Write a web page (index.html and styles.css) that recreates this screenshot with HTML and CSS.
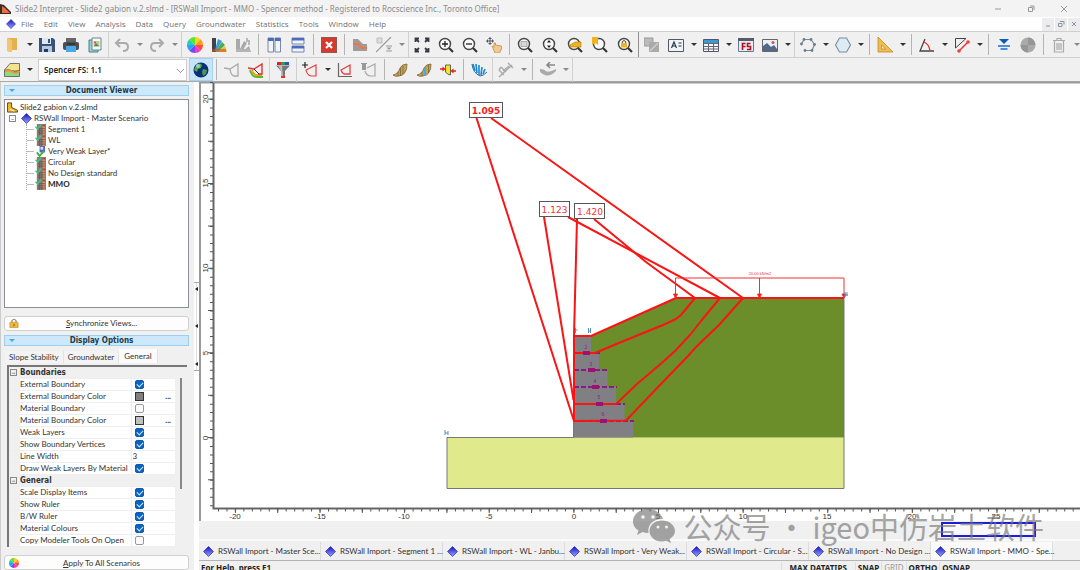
FILE: index.html
```html
<!DOCTYPE html>
<html lang="en">
<head>
<meta charset="UTF-8">
<meta name="viewport" content="width=device-width, initial-scale=1.0">
<title>Slide2 Interpret</title>
<link rel="stylesheet" href="styles.css">
</head>
<body>

<!-- shared icons -->
<svg class="defs" aria-hidden="true">
    <defs>
        <linearGradient id="blueGrad" x1="0" y1="0" x2="0" y2="1">
            <stop offset="0" stop-color="#1414c8"/>
            <stop offset="1" stop-color="#9aa4ff"/>
        </linearGradient>
        <symbol id="diamond" viewBox="0 0 12 12">
            <path d="M6 .6 11.4 6 6 11.4.6 6z" fill="url(#blueGrad)" stroke="#2a2a9a" stroke-width=".8"/>
        </symbol>
        <symbol id="calc" viewBox="0 0 12 12">
            <rect x="2" y="0" width="10" height="12" fill="#8a7d78"/>
            <path d="M8 3h3v9H8z" fill="#d98a66"/>
            <path d="M3 5h8M3 7.5h8M3 10h8M5 4v8M7.5 4v8" stroke="#5d5552" stroke-width=".7"/>
            <path d="M8 1.500h3" stroke="#c8401c"/>
            <path d="M.5 3 3 5.500 6.500.8" fill="none" stroke="#3cc878" stroke-width="1.500"/>
        </symbol>
        <symbol id="wheel" viewBox="0 0 16 16">
            <path d="M8 8V0a8 8 0 0 1 5.700 2.300z" fill="#ffd21e"/>
            <path d="M8 8l5.700-5.700A8 8 0 0 1 16 8z" fill="#ff9a1e"/>
            <path d="M8 8h8a8 8 0 0 1-2.300 5.700z" fill="#ff4a3c"/>
            <path d="M8 8l5.700 5.700A8 8 0 0 1 8 16z" fill="#f03cc8"/>
            <path d="M8 8v8a8 8 0 0 1-5.700-2.300z" fill="#7a46f0"/>
            <path d="M8 8l-5.700 5.700A8 8 0 0 1 0 8z" fill="#28a0ff"/>
            <path d="M8 8H0a8 8 0 0 1 2.300-5.700z" fill="#1ed2b4"/>
            <path d="M8 8 2.300 2.300A8 8 0 0 1 8 0z" fill="#5ae628"/>
        </symbol>
        <symbol id="lens" viewBox="0 0 16 16">
            <circle cx="7" cy="7" r="5.500" fill="#f8f8f8" stroke="#444" stroke-width="1.400"/>
            <path d="M11 11l4 4" stroke="#333" stroke-width="2.200"/>
        </symbol>
        <symbol id="wedge" viewBox="0 0 16 16">
            <path d="M0 6l6 1 8-5v12H9.500Q6.500 12 6 7" fill="none" stroke="currentColor" stroke-width="1.300"/>
        </symbol>
    </defs>
</svg>

<header class="titlebar">
    <svg class="icon-app" viewBox="0 0 12 12"><path d="M0 1l4 1 7 7v2H0z" fill="#3b2a28"/><path d="M2 3l3 2 5 5H2z" fill="#e87040"/></svg>
    <span class="title">Slide2 Interpret - Slide2 gabion v.2.slmd - [RSWall Import - MMO - Spencer method - Registered to Rocscience Inc., Toronto Office]</span>
    <div class="window-buttons">
        <button aria-label="Minimize"><svg viewBox="0 0 8 8"><path d="M1 4h6"/></svg></button>
        <button aria-label="Restore"><svg viewBox="0 0 8 8"><path d="M1.500 2.500h4v4h-4zM3 1h4v4"/></svg></button>
        <button aria-label="Close"><svg viewBox="0 0 8 8"><path d="M1 1l6 6M7 1 1 7"/></svg></button>
    </div>
</header>

<nav class="menubar">
    <svg class="icon-doc"><use href="#diamond"/></svg>
    <a href="#">File</a>
    <a href="#">Edit</a>
    <a href="#">View</a>
    <a href="#">Analysis</a>
    <a href="#">Data</a>
    <a href="#">Query</a>
    <a href="#">Groundwater</a>
    <a href="#">Statistics</a>
    <a href="#">Tools</a>
    <a href="#">Window</a>
    <a href="#">Help</a>
    <div class="mdi-buttons">
        <button aria-label="Minimize view"><svg viewBox="0 0 8 8"><path d="M2 6h4"/></svg></button>
        <button aria-label="Restore view"><svg viewBox="0 0 8 8"><path d="M1.500 3.500h3.500v3h-3.500zM3 1.500h4v3"/></svg></button>
        <button aria-label="Close view"><svg viewBox="0 0 8 8"><path d="M2 2l4 4M6 2 2 6"/></svg></button>
    </div>
</nav>

<div class="toolbar toolbar-main">
    <button aria-label="Open"><svg viewBox="0 0 16 16"><path d="M3 1h10v12H7v2L3 14z" fill="#e6b04a"/><path d="M3 1l5 2v12l-5-1z" fill="#f2c670"/></svg></button>
    <button class="caret" aria-label="Open recent"></button>
    <button aria-label="Save"><svg viewBox="0 0 16 16"><path d="M0 1h14l2 2v12H0z" fill="#38527e"/><path d="M3 1h9v6H3z" fill="#dfe7f2"/><path d="M9 2h2v4H9z" fill="#38527e"/><path d="M3 9h10v6H3z" fill="#b8c8de"/><path d="M5 12h4v3H5z" fill="#223a60"/></svg></button>
    <button aria-label="Print"><svg viewBox="0 0 16 16"><path d="M3 1h10v5H3z" fill="#666"/><rect y="5" width="16" height="8" rx="2" fill="#4a4f56"/><path d="M3 9h10v6H3z" fill="#4aa8e8"/><path d="M4 7h8" stroke="#222"/></svg></button>
    <button aria-label="Copy"><svg viewBox="0 0 16 16"><path d="M2 3h9v12H2z" fill="#9ccdd0" stroke="#4c7f86"/><path d="M5 1h9v12H5z" fill="#f4fafa" stroke="#5e8c90"/><path d="M6.500 4h6v6h-6z" fill="#d8c09a"/><path d="M7 9l2-3 3 3z" fill="#3d9950"/><circle cx="8" cy="5.500" r="1" fill="#e84038"/></svg></button>
    <span class="edge"></span>
    <button aria-label="Undo"><svg viewBox="0 0 16 16" class="stroke-grey"><path d="M6 2 2 6l4 4M2 6h8q4 0 4 4t-5 4"/></svg></button>
    <button class="caret dim" aria-label="Undo list"></button>
    <button aria-label="Redo"><svg viewBox="0 0 16 16" class="stroke-grey"><path d="M10 2l4 4-4 4M14 6H6q-4 0-4 4t5 4"/></svg></button>
    <button class="caret dim" aria-label="Redo list"></button>
    <span class="edge"></span>
    <button aria-label="Display options"><svg><use href="#wheel"/></svg></button>
    <button aria-label="Contour options"><svg viewBox="0 0 16 16"><path d="M1 1h4v14H1z" fill="#3d4348"/><path d="M4 13 7 2l4 2-6 11z" fill="#3c9cd8"/><path d="M5 14l6-9 3 3-7 7z" fill="#4aae48"/><path d="M6 15l8-6 2 6z" fill="#e8c030"/><path d="M1 12h14v3H1z" fill="#d05030" opacity=".6"/></svg></button>
    <button aria-label="Contours off" disabled><svg viewBox="0 0 16 16"><path d="M1 2h4v13H1zM5 12 9 4l3 2-5 9zM7 15l7-6 2 6z" fill="#a9a9a9"/><path d="M1 12h14v3H1z" fill="#b4b4b4"/><path d="M12 1v4M14 3v5" stroke="#b8b8b8" stroke-width="2"/></svg></button>
    <span class="sep"></span>
    <button aria-label="Tile vertically"><svg viewBox="0 0 16 16"><path d="M2 1h5.500v14H2zM9 1h5.500v14H9z" fill="#f0f4fc" stroke="#7888a8"/><path d="M2 1h5.500v3H2zM9 1h5.500v3H9z" fill="#4a6cc0"/></svg></button>
    <button aria-label="Tile horizontally"><svg viewBox="0 0 16 16"><path d="M2 1h12v6H2zM2 9h12v6H2z" fill="#f0f4fc" stroke="#7888a8"/><path d="M2 1h12v2.500H2zM2 9h12v2.500H2z" fill="#4a6cc0"/></svg></button>
    <span class="sep"></span>
    <button aria-label="Close all"><svg viewBox="0 0 16 16"><rect x=".5" y=".5" width="15" height="15" fill="#d8392c" stroke="#8a5a58"/><path d="M5 5l6 6M11 5l-6 6" stroke="#fff" stroke-width="2.200"/></svg></button>
    <span class="sep"></span>
    <button aria-label="Slope"><svg viewBox="0 0 16 16"><path d="M1 2h5l5 5h4v7H1z" fill="#9c9c9c"/><path d="M1 7h5l4 4h5" stroke="#f07840" stroke-width="2" fill="none"/></svg></button>
    <button aria-label="Units" disabled><svg viewBox="0 0 16 16"><path d="M1 1h5v5H1z" fill="#ddd" stroke="#bbb"/><path d="M15 0 0 15" stroke="#999" stroke-width="1.200"/><path d="M10 9h6M10 14h6" stroke="#999"/><path d="M10.500 10.500h5l-2.500 2.500z" fill="#999"/></svg></button>
    <button class="caret dim" aria-label="Units list"></button>
    <span class="edge"></span>
    <button aria-label="Zoom all"><svg viewBox="0 0 16 16"><path d="M1.500 5V1.500H5M11 1.500h3.500V5M14.500 11v3.500H11M5 14.500H1.500V11M2 2l3 3M14 2l-3 3M14 14l-3-3M2 14l3-3" fill="none" stroke="#3a3a44" stroke-width="1.800"/></svg></button>
    <button aria-label="Zoom in"><svg viewBox="0 0 16 16"><use href="#lens"/><path d="M4 7h6M7 4v6" stroke="#222" stroke-width="1.300"/></svg></button>
    <button aria-label="Zoom out"><svg viewBox="0 0 16 16"><use href="#lens"/><path d="M4 7h6" stroke="#222" stroke-width="1.300"/></svg></button>
    <button aria-label="Pan"><svg viewBox="0 0 16 16"><path d="M4 0v8M0 4h8M2.500 1.500h3M2.500 6.500h3M1.500 2.500v3M6.500 2.500v3" stroke="#556" stroke-width="1"/><path d="M6 9l2 1V6h1.500v2l6 1v3l-2 4H9z" fill="#f0c890" stroke="#c09050" stroke-width=".8"/></svg></button>
    <span class="sep"></span>
    <div class="group">
        <button aria-label="Zoom window"><svg viewBox="0 0 16 16"><use href="#lens"/><path d="M4 4.500h6v5H4z" fill="#d8d8d8" stroke="#999" stroke-width=".8"/></svg></button>
        <button aria-label="Zoom vertical"><svg viewBox="0 0 16 16"><use href="#lens"/><path d="M7 3l2 2.500H5zM7 11l2-2.500H5z" fill="#222"/></svg></button>
        <button aria-label="Zoom slope"><svg viewBox="0 0 16 16"><use href="#lens"/><path d="M3 10V8l5-3h6v5z" fill="#f2b21e" stroke="#a87a10" stroke-width=".6"/></svg></button>
        <button aria-label="Zoom bookmark"><svg viewBox="0 0 16 16"><use href="#lens"/><path d="M0 0h6v8L3 6 0 8z" fill="#f2b21e"/></svg></button>
        <button aria-label="Lock zoom"><svg viewBox="0 0 16 16"><use href="#lens"/><path d="M4 6h6v4.500H4z" fill="#eeb422"/><path d="M5.300 6V4.500q1.700-2 3.400 0V6" fill="none" stroke="#444"/></svg></button>
    </div>
    <span class="edge dark"></span>
    <button aria-label="Copy tools" disabled><svg viewBox="0 0 16 16"><path d="M0 1h9v8H0z" fill="#bbb" stroke="#999"/><path d="M5 5h10v10H5z" fill="#aaa"/><path d="M6 14l8-8" stroke="#ccc" stroke-width="1.500"/></svg></button>
    <button aria-label="Text box"><svg viewBox="0 0 16 16"><path d="M.5 2.500h15v12H.5z" fill="#eef4f8" stroke="#556"/><path d="M3.500 11 6 5l2.500 6M4.500 9h3M10.500 6h3M10.500 9h3" fill="none" stroke="#234" stroke-width="1.100"/></svg></button>
    <button class="caret" aria-label="Text tools"></button>
    <button aria-label="Table"><svg viewBox="0 0 16 16"><path d="M.5 2.500h15v12H.5z" fill="#f4f6f8" stroke="#556"/><path d="M1 3h14v3H1z" fill="#3a9ad8"/><path d="M1 6.500h14M1 9.500h14M1 12h14M5.500 6v8M10.500 6v8" stroke="#667"/></svg></button>
    <button class="caret" aria-label="Table tools"></button>
    <button aria-label="Factor of safety"><svg viewBox="0 0 16 16"><path d="M.5 1.500h15v13H.5z" fill="#e6ecf4" stroke="#66789a"/><path d="M0 1h16v3H0z" fill="#555c68"/><path d="M4.500 13V6.500h3M4.500 9.500h3M12.500 6.500h-3v3h3v3h-3.500" fill="none" stroke="#b01020" stroke-width="1.600"/></svg></button>
    <button aria-label="Image"><svg viewBox="0 0 16 16"><path d="M.5 2.500h15v12H.5z" fill="#e8f0f8" stroke="#666"/><path d="M1 14V9l4-3 4 4 3-2 3 4v2z" fill="#56688a"/><circle cx="11" cy="5.500" r="1.500" fill="#e84848"/></svg></button>
    <button class="caret" aria-label="Image tools"></button>
    <span class="edge"></span>
    <button aria-label="Polyline"><svg viewBox="0 0 16 16"><path d="M1.500 7 4 2.500h7l3.500 5-2.500 6H5" fill="none" stroke="#7a8a9c" stroke-width="1.200"/><g fill="#6a7c94"><circle cx="1.500" cy="7" r="1.400"/><circle cx="4" cy="2.500" r="1.400"/><circle cx="11" cy="2.500" r="1.400"/><circle cx="14.500" cy="7.500" r="1.400"/><circle cx="12" cy="13.500" r="1.400"/><circle cx="5" cy="13.500" r="1.400"/></g></svg></button>
    <button class="caret" aria-label="Polyline tools"></button>
    <button aria-label="Polygon"><svg viewBox="0 0 16 16"><path d="M4.500 1h7l4 7-4 7h-7l-4-7z" fill="#dcecf4" stroke="#7a8c9c" stroke-width="1.100"/></svg></button>
    <button class="caret" aria-label="Polygon tools"></button>
    <span class="sep"></span>
    <button aria-label="Set square"><svg viewBox="0 0 16 16"><path d="M1 0l15 15H1z" fill="#f0bc50" stroke="#c08c28" stroke-width=".8"/><path d="M4.500 8l4 4h-4z" fill="#eee" stroke="#c08c28" stroke-width=".8"/></svg></button>
    <button class="caret" aria-label="Measure tools"></button>
    <span class="sep"></span>
    <button aria-label="Angle"><svg viewBox="0 0 16 16"><path d="M6 2 1 14h14" fill="none" stroke="#444" stroke-width="1.300"/><path d="M5 5q5 2 6 9" fill="none" stroke="#e83030" stroke-width="1.300"/></svg></button>
    <button class="caret" aria-label="Angle tools"></button>
    <button aria-label="Dimension"><svg viewBox="0 0 16 16"><path d="M1.500 11V1.500H12z" fill="#eee" stroke="#444"/><path d="M5 14l9-9" stroke="#e83030" stroke-width="1.500"/><circle cx="5" cy="14" r="1.800" fill="#f04040"/><circle cx="14" cy="5" r="1.800" fill="#f04040"/></svg></button>
    <button class="caret" aria-label="Dimension tools"></button>
    <span class="sep"></span>
    <button aria-label="Water table"><svg viewBox="0 0 16 16"><path d="M3 2h10l-5 5z" fill="#0c5ab4"/><path d="M2 9h12M4.500 12h7" stroke="#1470d0" stroke-width="1.400"/></svg></button>
    <button aria-label="Stereonet" disabled><svg viewBox="0 0 16 16"><circle cx="8" cy="8" r="7.500" fill="#aaa"/><path d="M8 8V.5A7.500 7.500 0 0 1 15.500 8zM8 8v7.500A7.500 7.500 0 0 1 .5 8z" fill="#969696"/></svg></button>
    <span class="sep"></span>
    <button aria-label="Delete" disabled><svg viewBox="0 0 16 16"><path d="M2 3.500h12M6 3V1.500h4V3M3.500 4v11h9V4M6 6v7M8 6v7M10 6v7" fill="none" stroke="#aaa" stroke-width="1.200"/></svg></button>
    <button class="caret dim" aria-label="Delete list"></button>
</div>

<div class="toolbar toolbar-second">
    <button aria-label="Materials"><svg viewBox="0 0 16 16"><path d="M.5 8 6 1.500h9.500V9H.5z" fill="#f2e38c" stroke="#555" stroke-width=".8"/><path d="M.5 8q5-1 8 1t7-1v6.500H.5z" fill="#8edb7c" stroke="#555" stroke-width=".8"/><path d="M1 9q5-1 8 1t6.500-1" fill="none" stroke="#f09040" stroke-width="1.800"/></svg></button>
    <button class="caret" aria-label="Materials list"></button>
    <select class="method" aria-label="Analysis method"><option>Spencer FS: 1.1</option></select>
    <button class="active" aria-label="Global minimum"><svg viewBox="0 0 16 16"><circle cx="8" cy="8" r="7.500" fill="#0c2f78"/><path d="M3 3q4-3 6 0l-1 3-3 1-1 3-3-2z" fill="#55a848"/><path d="M10 7l4 1-1 4-3 2-1-4z" fill="#4a9c58"/><circle cx="5" cy="4" r="2" fill="#b8e4e8" opacity=".7"/></svg></button>
    <span class="sep"></span>
    <button class="tint-grey" aria-label="Surfaces" disabled><svg><use href="#wedge"/></svg></button>
    <button aria-label="All surfaces"><svg viewBox="0 0 16 16"><path d="M2 8q2 7 7 7h6" fill="none" stroke="#58b830" stroke-width="2"/><path d="M4 7.500q1 6 6 5.500h4" fill="none" stroke="#f0a020" stroke-width="1.800"/><path d="M0 6l6 1 8-5v10h-4" fill="none" stroke="#e83030" stroke-width="1.400"/><path d="M6 7l5 5" stroke="#333"/></svg></button>
    <span class="edge"></span>
    <button aria-label="Filter"><svg viewBox="0 0 16 16"><path d="M1 3.500h14L10 9v5H6V9z" fill="#777"/><path d="M3 3.500h4L8 14H6V9z" fill="#bbb"/><path d="M2 0h4v3H2z" fill="#d02828"/><path d="M6 0h4v3H6z" fill="#28a048"/><path d="M10 0h4v3h-4z" fill="#2850d0"/><path d="M6 14h4v2H6z" fill="#e83030"/></svg></button>
    <span class="edge"></span>
    <button class="tint-red" aria-label="Add query"><svg viewBox="0 0 16 16"><path d="M3 0v6M0 3h6" stroke="#222" stroke-width="1.200"/><path d="M4 8l10-5v11H9q-4-1-5-6z" fill="none" stroke="currentColor" stroke-width="1.200"/></svg></button>
    <button class="caret" aria-label="Query list"></button>
    <button class="tint-red" aria-label="Graph query"><svg viewBox="0 0 16 16"><path d="M1.500 1v13.500H15" fill="none" stroke="#666" stroke-width="1.200"/><path d="M4 8l9-5v9H7q-2-1-3-4z" fill="none" stroke="currentColor" stroke-width="1.300"/></svg></button>
    <button class="tint-grey" aria-label="Delete query" disabled><svg viewBox="0 0 16 16"><path d="M1 2h4v6H1zM0 1h6v1H0z" fill="#999"/><path d="M6 6l8-4v12H9q-4-1-5-5" fill="none" stroke="currentColor" stroke-width="1.200"/></svg></button>
    <span class="sep"></span>
    <button aria-label="Show slices"><svg viewBox="0 0 16 16"><path d="M1 13q5-1 7-7 2-4 7-4 0 11-8 12-4 1-6-1z" fill="#c4a45c" stroke="#7a6430" stroke-width=".8"/><path d="M6 10v4M8.500 6v8M11 4v8" stroke="#7a6430" stroke-width=".8"/></svg></button>
    <button aria-label="Query slice"><svg viewBox="0 0 16 16"><path d="M1 13q5-1 7-7 2-4 7-4 0 11-8 12-4 1-6-1z" fill="#c4a45c" stroke="#7a6430" stroke-width=".8"/><path d="M7.500 7 10 4v9l-2.500 1z" fill="#50a8d8"/><path d="M6 10v4M12.500 3v8" stroke="#7a6430" stroke-width=".8"/></svg></button>
    <button aria-label="Slice forces"><svg viewBox="0 0 16 16"><path d="M5.500 3h5v10l-3-1-2-2z" fill="#f4e428" stroke="#554" stroke-width=".9"/><path d="M0 7h4M16 9h-4" stroke="#e81c1c" stroke-width="1.400"/><path d="M2.500 4.500 5.500 7l-3 2.500zM13.500 6.500l-3 2.500 3 2.500z" fill="#e81c1c"/></svg></button>
    <span class="sep"></span>
    <button aria-label="Distribution"><svg viewBox="0 0 16 16"><path d="M1 2q1 9 8 12 3 0 7-4" fill="none" stroke="#3068a0"/><path d="M2 2l2 7M5 2l1 9M8 3v10M11 5l-1 8M14 7l-2 5" stroke="#1c88d0" stroke-width="1.600"/></svg></button>
    <span class="edge"></span>
    <button aria-label="Support forces" disabled><svg viewBox="0 0 16 16"><path d="M1 15 14 3" stroke="#aaa" stroke-width="1.500"/><path d="M10 1l5 5M3 5l5 5M1 8l5 5M3 5 1 8M11 4 5 9" stroke="#aaa" stroke-width="1.400"/></svg></button>
    <button class="caret dim" aria-label="Support list"></button>
    <span class="sep"></span>
    <button aria-label="Displacement" disabled><svg viewBox="0 0 16 16"><path d="M0 7q4 0 6 2t10-2v2q-6 6-11 4T0 9z" fill="#aaa"/><path d="M15 3H8M10 0 7 3l3 3" fill="none" stroke="#888" stroke-width="1.600"/></svg></button>
    <button class="caret dim" aria-label="Displacement list"></button>
    <span class="edge"></span>
</div>

<main class="workspace">
    <aside class="sidebar">
        <h2 class="panel-title"><span class="arrow"></span>Document Viewer</h2>
        <ul class="tree">
            <li><svg viewBox="0 0 12 12"><path d="M.5 1H5v5l6.500 3v2H.5z" fill="#f0b828" stroke="#554010"/><path d="M3 8l5 2" stroke="#fff"/></svg>Slide2 gabion v.2.slmd</li>
            <li class="scenario"><span class="toggle">−</span><svg><use href="#diamond"/></svg>RSWall Import - Master Scenario
                <ul>
                    <li><svg><use href="#calc"/></svg>Segment 1</li>
                    <li><svg><use href="#calc"/></svg>WL</li>
                    <li><svg viewBox="0 0 12 12"><path d="M5 0h6v7H5z" fill="#5868b8"/><path d="M6 1h3v3H6z" fill="#dde"/><path d="M2 7l3 4 5-6" fill="none" stroke="#38b048" stroke-width="2"/></svg>Very Weak Layer*</li>
                    <li><svg><use href="#calc"/></svg>Circular</li>
                    <li><svg><use href="#calc"/></svg>No Design standard</li>
                    <li class="current"><svg><use href="#calc"/></svg>MMO</li>
                </ul>
            </li>
        </ul>
        <button class="wide-button">
            <svg viewBox="0 0 12 12"><path d="M3.500 6V3.500q2.500-4 5 0V6" fill="none" stroke="#998860" stroke-width="1.400"/><rect x="1" y="5" width="10" height="7" rx="1" fill="#f0b83c" stroke="#b08428" stroke-width=".6"/><path d="M6 7v3" stroke="#6a4c10"/></svg>
            <span><u>S</u>ynchronize Views...</span>
        </button>
        <h2 class="panel-title options-title"><span class="arrow"></span>Display Options</h2>
        <div class="option-tabs">
            <button>Slope Stability</button>
            <button>Groundwater</button>
            <button class="selected">General</button>
        </div>
        <div class="options">
            <table>
                <tbody>
                    <tr class="section"><td><span class="toggle">−</span></td><th colspan="2">Boundaries</th></tr>
                    <tr><td></td><td><label for="extB">External Boundary</label></td><td><input type="checkbox" id="extB" checked></td></tr>
                    <tr><td></td><td>External Boundary Color</td><td><span class="swatch dark"></span><button class="more" aria-label="Pick external boundary color">...</button></td></tr>
                    <tr><td></td><td><label for="matB">Material Boundary</label></td><td><input type="checkbox" id="matB"></td></tr>
                    <tr><td></td><td>Material Boundary Color</td><td><span class="swatch"></span><button class="more" aria-label="Pick material boundary color">...</button></td></tr>
                    <tr><td></td><td><label for="weak">Weak Layers</label></td><td><input type="checkbox" id="weak" checked></td></tr>
                    <tr><td></td><td><label for="vert">Show Boundary Vertices</label></td><td><input type="checkbox" id="vert" checked></td></tr>
                    <tr><td></td><td><label for="lineW">Line Width</label></td><td><input type="text" id="lineW" value="3"></td></tr>
                    <tr><td></td><td><label for="drawW">Draw Weak Layers By Material</label></td><td><input type="checkbox" id="drawW" checked></td></tr>
                    <tr class="section"><td><span class="toggle">−</span></td><th colspan="2">General</th></tr>
                    <tr><td></td><td><label for="scale">Scale Display Items</label></td><td><input type="checkbox" id="scale" checked></td></tr>
                    <tr><td></td><td><label for="ruler">Show Ruler</label></td><td><input type="checkbox" id="ruler" checked></td></tr>
                    <tr><td></td><td><label for="bw">B/W Ruler</label></td><td><input type="checkbox" id="bw" checked></td></tr>
                    <tr><td></td><td><label for="matC">Material Colours</label></td><td><input type="checkbox" id="matC" checked></td></tr>
                    <tr><td></td><td><label for="copyM">Copy Modeler Tools On Open</label></td><td><input type="checkbox" id="copyM"></td></tr>
                </tbody>
            </table>
            <div class="scrollbar"><div class="thumb"></div></div>
        </div>
        <button class="wide-button apply">
            <svg><use href="#wheel"/></svg>
            <span><u>A</u>pply To All Scenarios</span>
        </button>
    </aside>

    <div class="splitter">
        <div class="grip"><i></i><i></i><i></i></div>
    </div>

    <section class="view">
        <svg class="plot" viewBox="199 82 881 439" preserveAspectRatio="xMinYMin meet">
            <rect x="199" y="82" width="881" height="439" fill="#fff"/>
            <path d="M200 521V82.500h880" class="frame"/>

            <!-- rulers -->
            <path d="M213.500 83V508.500H1080" class="axis"/>
            <path d="M211.500 82.100V508" class="minor-v"/>
            <path d="M210.500 98.500V508" class="major-v"/>
            <path d="M218 510H1078" class="minor-h"/>
            <path d="M234.900 510.500H1078" class="major-h"/>
            <g class="ruler-text">
                <text x="235" y="519">-20</text>
                <text x="320" y="519">-15</text>
                <text x="404" y="519">-10</text>
                <text x="489" y="519">-5</text>
                <text x="574" y="519">0</text>
                <text x="658" y="519">5</text>
                <text x="743" y="519">10</text>
                <text x="827" y="519">15</text>
                <text x="912" y="519">20</text>
                <text x="996" y="519">25</text>
                <text transform="translate(208 99) rotate(-90)">20</text>
                <text transform="translate(208 183) rotate(-90)">15</text>
                <text transform="translate(208 268) rotate(-90)">10</text>
                <text transform="translate(208 353) rotate(-90)">5</text>
                <text transform="translate(208 438) rotate(-90)">0</text>
            </g>

            <!-- soils -->
            <path d="M447 437.500H844V488H447z" fill="#e0e98c"/>
            <path d="M574 336h17l85-38h168v139.500H574z" fill="#6b8e2a"/>
            <path d="M844 298V488.500H447V437.500h127" class="soil-line"/>
            <path d="M574 336h17v17h8v17h8.500v17h8.500v17h8.500v17h8.500v16.500H574z" fill="#808084"/>
            <path d="M573.500 437.500V336" stroke="#777"/>

            <!-- gabion interfaces -->
            <path d="M574 353h26M574 370h34M574 387h43M574 404h51M574 421h60" class="interface"/>
            <g class="gabion-text">
                <text x="586" y="349">2</text>
                <text x="591" y="366">3</text>
                <text x="595" y="383">4</text>
                <text x="599" y="399">5</text>
                <text x="603" y="416">6</text>
            </g>

            <!-- slip surfaces -->
            <g class="slip">
                <path d="M476.500 118 574 421V336h17l85-38h168"/>
                <path d="M491 118 743 298 719 325 696 347 688 356 659 386 626 420.500 574 421"/>
                <path d="M544 217 573.500 400"/>
                <path d="M568 217 720 298 701 321 690 335 675 351 664 361 650 373 637 384 616 404H574"/>
                <path d="M577 219 574 336"/>
                <path d="M594 219 646 262 695 298 681 315 676 319 663 325 620 342.500 595 353H574"/>
            </g>
            <path d="M583 351h7v4h-7zM588 368h7v4h-7zM592 385h7v4h-7zM596 402h7v4h-7zM600 419h7v4h-7z" fill="#a01070"/>

            <!-- distributed load -->
            <g class="load">
                <path d="M675.500 297V278H844v20M759.500 278v18"/>
                <path d="M673.500 294h4l-2 4zM757.500 294h4l-2 4zM842 294h4l-2 4z" class="head"/>
                <text x="760" y="275">20.00 kN/m2</text>
            </g>
            <path d="M445 430v5M445 433h3M448 431v4M575.500 328v5M575.500 330h2M588.500 328v5M590.500 328v5M588 331h3M845 292v5M847 292v4M845 295h3" class="vertex"/>

            <g class="fs-label">
                <rect x="469.500" y="102.500" width="33" height="15"/>
                <text x="486" y="114">1.095</text>
                <rect x="539.500" y="201.500" width="30" height="15"/>
                <text x="554.500" y="213" class="light">1.123</text>
                <rect x="574.500" y="203.500" width="30" height="15"/>
                <text x="590" y="215" class="light">1.420</text>
            </g>
        </svg>

        <div class="overview"><div class="overview-box"></div></div>

        <div class="doc-tabs">
            <button><svg><use href="#diamond"/></svg>RSWall Import - Master Sce...</button>
            <button><svg><use href="#diamond"/></svg>RSWall Import - Segment 1 ...</button>
            <button><svg><use href="#diamond"/></svg>RSWall Import - WL - Janbu...</button>
            <button><svg><use href="#diamond"/></svg>RSWall Import - Very Weak...</button>
            <button><svg><use href="#diamond"/></svg>RSWall Import - Circular - S...</button>
            <button><svg><use href="#diamond"/></svg>RSWall Import - No Design ...</button>
            <button class="selected"><svg><use href="#diamond"/></svg>RSWall Import - MMO - Spe...</button>
        </div>

        <footer class="statusbar">
            <span class="help">For Help, press F1</span>
            <span class="datatips">MAX DATATIPS</span>
            <span>SNAP</span>
            <span class="off">GRID</span>
            <span>ORTHO</span>
            <span>OSNAP</span>
        </footer>

        <div class="watermark">
            <svg viewBox="0 0 42 36">
                <path d="M15 1C6 1 0 7 0 13.500c0 4 2 7 5.500 9L4 27l5.500-3q3 1 6 1C14 16 21 10.500 30 11 28 5 22 1 15 1z"/>
                <path d="M29 12.500c-7.500 0-12.500 5-12.500 10.500S21.500 33.500 29 33.500q2 0 4-.8L38 35l-1.300-4c3.300-2 5.300-5 5.300-8 0-5.500-5.500-10.500-13-10.500z"/>
                <g fill="#f2f2f2"><circle cx="10" cy="9" r="1.800"/><circle cx="20" cy="9" r="1.800"/><circle cx="25" cy="19" r="1.500"/><circle cx="33.500" cy="19" r="1.500"/></g>
            </svg>
            <span>公众号 · igeo中仿岩土软件</span>
        </div>
    </section>
</main>

</body>
</html>
```
FILE: styles.css
```css
* {
    box-sizing: border-box;
}

body {
    margin: 0;
    height: 100vh;
    display: flex;
    flex-direction: column;
    overflow: hidden;
    background: #f0f0f0;
    color: #333;
    font-family: "Noto Sans", "Open Sans", sans-serif;
    font-size: 8px;
    line-height: 12px;
}

button {
    margin: 0;
    padding: 0;
    border: none;
    background: none;
    color: inherit;
    font: inherit;
}

.defs {
    position: absolute;
    width: 0;
    height: 0;
}

/* title and menu */
.titlebar {
    display: flex;
    align-items: center;
    flex: none;
    height: 17px;
    background: #f3f3f3;
    color: #8c8c8c;
}

.icon-app {
    width: 12px;
    height: 12px;
    margin-right: 3px;
}

.title {
    flex: 1;
    white-space: nowrap;
}

.window-buttons,
.mdi-buttons {
    display: flex;
    align-items: center;
}

.window-buttons button {
    width: 33px;
    height: 16px;
}

.window-buttons svg,
.mdi-buttons svg {
    display: block;
    width: 8px;
    height: 8px;
    margin: auto;
    fill: none;
    stroke: #999;
}

.menubar {
    display: flex;
    align-items: center;
    flex: none;
    gap: 10px;
    height: 14px;
    padding-left: 6px;
    background: #fff;
    font-family: "Open Sans", "Noto Sans", sans-serif;
}

.icon-doc {
    width: 10px;
    height: 10px;
    margin-right: -5px;
}

.menubar a {
    color: #707070;
    text-decoration: none;
}

.mdi-buttons {
    margin-left: auto;
    gap: 1px;
}

.mdi-buttons button {
    width: 12px;
    height: 13px;
    background: #ececec;
}

.mdi-buttons svg {
    stroke: #8a94a4;
}

/* toolbars */
.toolbar {
    display: flex;
    align-items: center;
    flex: none;
    border-top: 1px solid #cfcfcf;
    background: #f0f0f0;
}

.toolbar-main {
    height: 26px;
}

.toolbar-second {
    height: 25px;
    border-bottom: 1px solid #a8a8a8;
}

.group {
    display: flex;
    gap: 1px;
}

.toolbar button {
    flex: none;
    width: 24px;
    height: 23px;
    display: flex;
    align-items: center;
    justify-content: center;
}

.toolbar button svg {
    width: 16px;
    height: 16px;
}

.toolbar .caret {
    width: 11px;
}

.caret::after {
    content: "";
    border: 3px solid transparent;
    border-top-color: #333;
    border-bottom: none;
}

.caret.dim::after {
    border-top-color: #888;
}

.toolbar .active {
    margin-left: 2px;
    background: #c8e4f8;
    border: 1px solid #a4d2f4;
}

.stroke-grey {
    fill: none;
    stroke: #aaa;
    stroke-width: 2;
}

.tint-grey {
    color: #aaa;
}

.tint-red {
    color: #e84040;
}

.sep,
.edge {
    flex: none;
    width: 1px;
    height: 21px;
    margin: 0 3px;
    background: #b4b4b4;
}

.edge {
    height: 25px;
    margin: 0 1px;
    background: #d0d0d0;
}

.edge.dark {
    background: #909090;
}

.method {
    width: 149px;
    height: 22px;
    margin-left: 3px;
    padding-left: 5px;
    appearance: none;
    border: 1px solid #ccc;
    border-radius: 0;
    background-color: #fff;
    background-image: linear-gradient(45deg, transparent 44%, #999 44%, #999 60%, transparent 60%), linear-gradient(-45deg, transparent 44%, #999 44%, #999 60%, transparent 60%);
    background-size: 4px 4px;
    background-position: 138px 9px, 141px 9px;
    background-repeat: no-repeat;
    color: #222;
    font-family: inherit;
    font-size: 8px;
    font-weight: 600;
}

/* workspace */
.workspace {
    flex: 1;
    min-height: 0;
    display: flex;
}

.sidebar {
    flex: none;
    width: 191px;
    padding: 3px 2px 0 3px;
    display: flex;
    flex-direction: column;
    border-left: 1px solid #ccc;
    font-family: Lato, "Liberation Sans", sans-serif;
}

.panel-title {
    display: flex;
    justify-content: center;
    flex: none;
    margin: 0;
    border: 1px solid #9cd0ec;
    background: #cce8fc;
    color: #223a4a;
    font-family: "DejaVu Sans Condensed", "DejaVu Sans", sans-serif;
    font-size: 8px;
    line-height: 9px;
}

.panel-title .arrow {
    margin: 3px auto 0 4px;
    border: 3px solid transparent;
    border-top-color: #4ca8dc;
    border-bottom: none;
    height: 0;
}

.panel-title::after {
    content: "";
    margin-left: auto;
}

.tree,
.tree ul {
    margin: 0;
    padding: 0;
    list-style: none;
}

.tree {
    flex: 1;
    min-height: 0;
    margin-top: 3px;
    padding: 2px;
    border: 1px solid #8c8f98;
    background: #fff;
    line-height: 11px;
    overflow: hidden;
}

.tree svg {
    width: 11px;
    height: 11px;
    margin-right: 2px;
    vertical-align: top;
}

.tree ul {
    margin-left: 19px;
    border-left: 1px dotted #aaa;
}

.tree ul li {
    padding-left: 8px;
    background: linear-gradient(#bbb, #bbb) 0 5px / 7px 1px no-repeat;
}

.tree .current {
    font-weight: 900;
}

.toggle {
    display: inline-block;
    width: 7px;
    height: 7px;
    border: 1px solid #888;
    line-height: 5px;
    text-align: center;
    font-size: 6px;
    font-weight: normal;
}

.tree .toggle {
    margin: 0 5px 0 2px;
}

.wide-button {
    flex: none;
    display: flex;
    align-items: center;
    height: 15px;
    margin: 8px 0 4px;
    padding: 0 4px;
    border: 1px solid #d0d0d0;
    border-radius: 3px;
    background: #fdfdfd;
}

.wide-button svg {
    width: 10px;
    height: 10px;
}

.wide-button span {
    flex: 1;
    text-align: center;
}

.wide-button.apply {
    margin-bottom: 0;
}

.option-tabs {
    flex: none;
    display: flex;
    align-items: flex-end;
    padding: 3px 1px 0;
}

.option-tabs button {
    height: 12px;
    padding: 0 4px;
    background: #f3f3f3;
    border-right: 1px solid #e2e2e2;
    white-space: nowrap;
}

.option-tabs .selected {
    height: 14px;
    padding: 0 5px;
    background: #fbfbfb;
}

.options {
    flex: none;
    display: flex;
    margin: 2px 2px 0 3px;
    border-top: 2px solid #777;
    border-left: 2px solid #777;
    background: #fff;
}

.options table {
    flex: 1;
    border-collapse: collapse;
    table-layout: fixed;
}

.options td,
.options th {
    height: 12px;
    padding: 0;
    border-bottom: 1px solid #eee;
    line-height: 11px;
    text-align: left;
    white-space: nowrap;
}

.options td:first-child {
    width: 11px;
    background: #f0f0f0;
    padding-left: 1px;
}

.options td:nth-child(2) {
    width: 111px;
    border-right: 1px solid #eee;
}

.options td:nth-child(3) {
    padding-left: 3px;
}

.section td,
.section th {
    background: #f0f0f0;
    font-family: "DejaVu Sans Condensed", "DejaVu Sans", sans-serif;
}

.options input,
.swatch {
    display: block;
    width: 9px;
    height: 9px;
    margin: 0;
}

.options input[type="checkbox"] {
    appearance: none;
    border: 1px solid #999;
    border-radius: 2px;
    background: #fafafa;
}

.options input[type="checkbox"]:checked {
    border-color: #0a5cb4;
    background: #0a64c0;
}

.options input:checked::after {
    content: "";
    display: block;
    width: 5px;
    height: 3px;
    margin: 1px;
    border: solid #cfe4f8;
    border-width: 0 0 1px 1px;
    transform: rotate(-45deg);
}

.options input[type="text"] {
    width: 30px;
    border: none;
    padding: 0;
    margin-left: -2px;
    color: inherit;
    font: inherit;
}

.swatch {
    float: left;
    border: 1px solid #333;
    background: #c0c0c0;
}

.swatch.dark {
    background: #808080;
}

.more {
    float: right;
    height: 9px;
    margin-right: 4px;
    font-weight: 900;
    line-height: 9px;
}

.scrollbar {
    width: 12px;
    padding: 11px 5px 0;
    background: #f0f0f0;
}

.thumb {
    width: 2px;
    height: 111px;
    background: #888;
}

.splitter {
    flex: none;
    width: 8px;
    display: flex;
    align-items: center;
    justify-content: flex-end;
    background: linear-gradient(to right, #f0f0f0 3px, #fff 3px);
}

.grip {
    width: 5px;
    height: 89px;
    display: flex;
    flex-direction: column;
    align-items: center;
    justify-content: space-between;
    padding: 4px 0;
    border: solid #aaa;
    border-width: 1px 0;
    background: linear-gradient(#ddd, #ddd) 50% 0 / 1px 100% no-repeat;
}

.grip i {
    border: 2px solid transparent;
    border-right: 3px solid #222;
    border-left: none;
}

.view {
    position: relative;
    flex: 1;
    min-width: 0;
    display: flex;
    flex-direction: column;
}

/* plot */
.plot {
    display: block;
    width: 100%;
    flex: 1;
    min-height: 0;
    fill: none;
}

.plot .frame {
    stroke: #999;
    stroke-width: 2;
}

.plot .axis {
    stroke: #666;
    stroke-width: 2;
}

.minor-v,
.minor-h,
.major-v,
.major-h {
    stroke: #555;
    stroke-width: 3;
    stroke-dasharray: 1 7.462;
}

.major-v,
.major-h {
    stroke-width: 5;
    stroke-dasharray: 1 41.310;
}

.ruler-text text {
    fill: #333;
    font-family: "Liberation Sans", Arial, sans-serif;
    font-size: 8px;
    text-anchor: middle;
}

.soil-line {
    stroke: #777;
}

.interface {
    stroke: #8a1a8a;
    stroke-width: 2;
    stroke-dasharray: 5 2;
}

.gabion-text text {
    fill: #8a1a8a;
    font-family: "Liberation Sans", Arial, sans-serif;
    font-size: 5px;
    text-anchor: middle;
}

.slip path {
    stroke: #fa1414;
    stroke-width: 2;
    stroke-linejoin: round;
}

.load path {
    stroke: #f03030;
}

.load .head {
    fill: #f01414;
}

.load text {
    fill: #f03030;
    font-family: "Liberation Sans", Arial, sans-serif;
    font-size: 4px;
    text-anchor: middle;
}

.vertex {
    stroke: #5a90c0;
}

.fs-label rect {
    fill: #fff;
    stroke: #555;
}

.fs-label text {
    fill: #fa2020;
    font-family: "DejaVu Sans", Verdana, sans-serif;
    font-size: 9px;
    font-weight: bold;
    text-anchor: middle;
}

.fs-label .light {
    fill: #fa3030;
    font-weight: normal;
}

.overview {
    flex: none;
    height: 20px;
    display: flex;
    justify-content: flex-end;
    padding: 1px 44px 0 0;
    border-bottom: 2px solid #fafafa;
}

.overview-box {
    width: 95px;
    height: 15px;
    border: 2px solid #1c1ce0;
    background: #f8f8f8;
}

.doc-tabs {
    flex: none;
    display: flex;
    height: 20px;
    padding-top: 1px;
    border-bottom: 1px solid #b4b4b4;
    font-family: Lato, "Liberation Sans", sans-serif;
}

.doc-tabs button {
    flex: none;
    width: 122px;
    display: flex;
    align-items: center;
    gap: 4px;
    padding-left: 4px;
    border-right: 1px solid #ddd;
    white-space: nowrap;
}

.doc-tabs .selected {
    background: #fafafa;
}

.doc-tabs svg {
    flex: none;
    width: 11px;
    height: 11px;
}

.watermark {
    position: absolute;
    right: 36px;
    bottom: 26px;
    display: flex;
    align-items: center;
    gap: 8px;
    color: #777;
    font-family: "Noto Sans CJK SC", sans-serif;
    font-size: 29px;
    line-height: 36px;
    opacity: .65;
    white-space: nowrap;
    pointer-events: none;
}

.watermark svg {
    width: 42px;
    height: 36px;
    fill: #777;
}

.statusbar {
    flex: none;
    display: flex;
    height: 9px;
    padding: 1px 108px 0 2px;
    overflow: hidden;
    color: #222;
    font-weight: bold;
    line-height: 12px;
}

.statusbar span {
    padding: 0 2px;
    border-left: 1px solid #ddd;
    white-space: nowrap;
}

.statusbar .help {
    margin-right: auto;
    padding: 0;
    border: none;
}

.statusbar .datatips {
    padding: 0 8px;
}

.statusbar .off {
    color: #999;
    font-weight: normal;
}
```
